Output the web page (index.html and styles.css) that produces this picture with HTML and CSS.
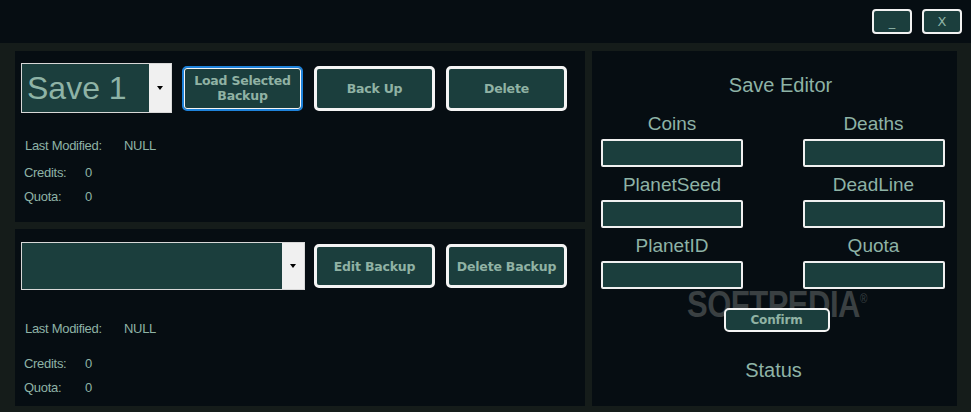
FILE: index.html
```html
<!DOCTYPE html>
<html>
<head>
    <title>Save Manager</title>
    <link rel="stylesheet" href="styles.css">
</head>
<body>
    <div class="titlebar">
        <button class="win-btn">_</button>
        <button class="win-btn">X</button>
    </div>
    <div class="main">
        <div class="left-col">
            <div class="panel saves">
                <div class="row">
                    <div class="combo small">
                        <span class="combo-text">Save 1</span>
                        <span class="combo-drop"><i class="arrow"></i></span>
                    </div>
                    <button class="btn focused">Load Selected<br>Backup</button>
                    <button class="btn">Back Up</button>
                    <button class="btn">Delete</button>
                </div>
                <div class="info first">
                    <span class="key">Last Modified:</span><span>NULL</span>
                </div>
                <div class="info">
                    <span class="key short">Credits:</span><span>0</span>
                </div>
                <div class="info last">
                    <span class="key short">Quota:</span><span>0</span>
                </div>
            </div>
            <div class="panel backups">
                <div class="row">
                    <div class="combo wide">
                        <span class="combo-text"></span>
                        <span class="combo-drop"><i class="arrow"></i></span>
                    </div>
                    <button class="btn">Edit Backup</button>
                    <button class="btn">Delete Backup</button>
                </div>
                <div class="info first">
                    <span class="key">Last Modified:</span><span>NULL</span>
                </div>
                <div class="info gap">
                    <span class="key short">Credits:</span><span>0</span>
                </div>
                <div class="info last">
                    <span class="key short">Quota:</span><span>0</span>
                </div>
            </div>
        </div>
        <div class="panel editor">
            <div class="editor-title">Save Editor</div>
            <div class="fields">
                <div class="field"><label>Coins</label><input type="text"></div>
                <div class="field"><label>Deaths</label><input type="text"></div>
                <div class="field"><label>PlanetSeed</label><input type="text"></div>
                <div class="field"><label>DeadLine</label><input type="text"></div>
                <div class="field"><label>PlanetID</label><input type="text"></div>
                <div class="field"><label>Quota</label><input type="text"></div>
            </div>
            <div class="watermark">SOFTPEDIA<sup>&reg;</sup></div>
            <button class="btn confirm">Confirm</button>
            <div class="status">Status</div>
        </div>
    </div>
</body>
</html>
```

FILE: styles.css
```css
body {
    margin: 0;
    width: 971px;
    height: 412px;
    background: #060d12;
    font-family: "Liberation Sans", Arial, sans-serif;
    color: #8eb3a6;
    overflow: hidden;
}

.titlebar {
    display: flex;
    justify-content: flex-end;
    gap: 10px;
    height: 43px;
    padding: 9px 9px 0 0;
    box-sizing: border-box;
}

.win-btn {
    width: 40px;
    height: 25px;
    background: #1b3e3d;
    border: 2px solid #f2f2f2;
    border-radius: 4px;
    color: #8eb3a6;
    font-family: "DejaVu Sans", sans-serif;
    font-size: 13px;
    padding: 0;
}

.main {
    display: flex;
    gap: 7px;
    background: #151c1a;
    padding: 8px 14px 6px 15px;
    height: 369px;
    box-sizing: border-box;
}

.left-col {
    display: flex;
    flex-direction: column;
    gap: 7px;
    width: 570px;
}

.panel {
    background: #060d12;
    box-sizing: border-box;
}

.saves {
    height: 171px;
    padding: 12px 0 0 6px;
}

.backups {
    flex: 1;
    padding: 13px 0 0 6px;
}

.row {
    display: flex;
    align-items: center;
}

.combo {
    display: flex;
    border: 1px solid #d8d8d8;
    box-sizing: border-box;
    margin-right: 10px;
}

.combo.small {
    width: 151px;
    height: 50px;
}

.combo.wide {
    width: 284px;
    height: 48px;
    margin-right: 9px;
}

.combo-text {
    flex: 1;
    background: #1b3e3d;
    font-size: 32px;
    line-height: 48px;
    padding-left: 5px;
    color: #8eb3a6;
}

.combo-drop {
    width: 22px;
    background: #f0f0f0;
    display: flex;
    align-items: center;
    justify-content: center;
}

.arrow {
    width: 0;
    height: 0;
    border-left: 3px solid transparent;
    border-right: 3px solid transparent;
    border-top: 4px solid #000;
}

.btn {
    width: 121px;
    height: 45px;
    margin-right: 11px;
    background: #1b3e3d;
    border: 3px solid #f4f4f4;
    border-radius: 5px;
    color: #90b2a4;
    font-family: "DejaVu Sans", Tahoma, sans-serif;
    font-weight: bold;
    font-size: 12.5px;
    line-height: 15px;
    letter-spacing: -0.2px;
    padding: 0;
}

.backups .btn {
    height: 44px;
}

.btn.focused {
    border: 2px solid #1e82da;
    box-shadow: inset 0 0 0 1px #f4f4f4;
}

.info {
    display: flex;
    font-size: 13px;
    line-height: 15px;
    letter-spacing: -0.3px;
    margin-top: 12px;
    padding-left: 3px;
}

.info.first {
    margin-top: 25px;
    padding-left: 4px;
}

.info.last {
    margin-top: 9px;
}

.backups .info.first {
    margin-top: 31px;
}

.backups .info.gap {
    margin-top: 20px;
}

.key {
    width: 99px;
}

.key.short {
    width: 61px;
}

.editor {
    position: relative;
    flex: 1;
    display: flex;
    flex-direction: column;
    align-items: center;
    padding: 22px 11px 0 9px;
}

.editor-title {
    font-size: 20px;
    line-height: 24px;
    margin-left: 14px;
}

.fields {
    display: grid;
    grid-template-columns: 142px 143px;
    column-gap: 59px;
    row-gap: 7px;
    margin-top: 16px;
    align-self: flex-start;
}

.field {
    display: flex;
    flex-direction: column;
    align-items: center;
    gap: 4px;
}

.field label {
    font-size: 19px;
    line-height: 22px;
}

.field input {
    width: 142px;
    height: 28px;
    box-sizing: border-box;
    background: #1b3e3d;
    border: 2px solid #f0f0f0;
    border-radius: 2px;
    outline: none;
}

.watermark {
    position: absolute;
    left: 95px;
    top: 236px;
    font-size: 31px;
    font-weight: bold;
    color: #3a4042;
    letter-spacing: -0.5px;
    transform: scaleY(1.2);
}

.watermark sup {
    font-size: 10px;
    font-weight: normal;
}

.btn.confirm {
    position: relative;
    width: 106px;
    height: 24px;
    margin: 19px 0 0 6px;
    border-width: 2px;
    font-size: 12px;
    line-height: 14px;
}

.status {
    margin-top: 26px;
    font-size: 20px;
    line-height: 24px;
}
```
